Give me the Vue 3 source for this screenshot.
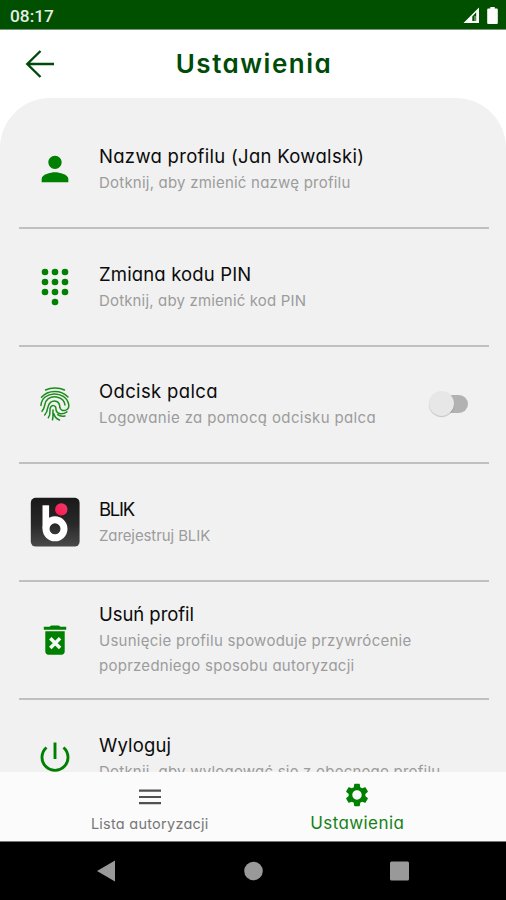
<script setup>
import { ref } from 'vue';

const fingerprintEnabled = ref(false);
const activeTab = ref('settings');

const items = [
  { id: 'profile', title: 'Nazwa profilu (Jan Kowalski)', text: 'Dotknij, aby zmienić nazwę profilu' },
  { id: 'pin', title: 'Zmiana kodu PIN', text: 'Dotknij, aby zmienić kod PIN' },
  { id: 'finger', title: 'Odcisk palca', text: 'Logowanie za pomocą odcisku palca' },
  { id: 'blik', title: 'BLIK', text: 'Zarejestruj BLIK' },
  { id: 'remove', title: 'Usuń profil', text: 'Usunięcie profilu spowoduje przywrócenie poprzedniego sposobu autoryzacji' },
  { id: 'logout', title: 'Wyloguj', text: 'Dotknij, aby wylogować się z obecnego profilu' }
];
</script>

<template>
  <div class="screen">
    <div class="status-bar">
      <span class="clock">08:17</span>
      <div class="status-icons">
        <svg width="17" height="17" viewBox="0 0 17 17">
          <path d="M0.5 16L16 0.5V16z" fill="#fff" />
          <path d="M9.3 14V9.6L13.2 5.2V14z" fill="#005000" />
          <path d="M11 14V9h2.4v5z" fill="#fff" opacity=".35" />
        </svg>
        <svg width="11" height="17" viewBox="0 0 11 17">
          <path d="M3.3 0h4.4v1.6h1.8c.8 0 1.3.5 1.3 1.3v12.8c0 .8-.5 1.3-1.3 1.3h-8C.7 17 .2 16.5.2 15.7V2.9c0-.8.5-1.3 1.3-1.3h1.8z" fill="#fff" />
        </svg>
      </div>
    </div>

    <header class="header">
      <button class="back" aria-label="Wstecz">
        <svg width="29" height="30" viewBox="0 0 29 30">
          <path d="M15.5 2L2.3 15l13.2 13M2.3 15H29" fill="none" stroke="#004b08" stroke-width="2.4" />
        </svg>
      </button>
      <h1>Ustawienia</h1>
    </header>

    <main class="panel">
      <div v-for="item in items" :key="item.id" class="row" :class="item.id">
        <div class="row-icon">
          <svg v-if="item.id === 'profile'" width="40" height="40" viewBox="0 0 24 24" fill="#008000">
            <path d="M12 12c2.21 0 4-1.79 4-4s-1.79-4-4-4-4 1.79-4 4 1.79 4 4 4zm0 2c-2.67 0-8 1.34-8 4v2h16v-2c0-2.66-5.33-4-8-4z" />
          </svg>
          <svg v-else-if="item.id === 'pin'" width="40" height="40" viewBox="0 0 24 24" fill="#008000">
            <circle cx="6" cy="3" r="2" /><circle cx="12" cy="3" r="2" /><circle cx="18" cy="3" r="2" />
            <circle cx="6" cy="9" r="2" /><circle cx="12" cy="9" r="2" /><circle cx="18" cy="9" r="2" />
            <circle cx="6" cy="15" r="2" /><circle cx="12" cy="15" r="2" /><circle cx="18" cy="15" r="2" />
            <circle cx="12" cy="21" r="2" />
          </svg>
          <svg v-else-if="item.id === 'finger'" width="30" height="34" viewBox="0 0 30 34" fill="none" stroke="#1c8c1c" stroke-width="1.5" stroke-linecap="round">
            <path d="M5.5 3C11 .2 19 .2 24.5 3" />
            <path d="M1.5 10.3C8 2.5 21 2.5 28 10" />
            <path d="M1 18.5C1.5 3.5 26 3 28.7 17.5c.9 6.3-7.7 8.5-9 2.7" />
            <path d="M2 24.3C6.5 19.5 3 15.5 8.3 11.7 14 8 24 10 25 18" />
            <path d="M4.7 28C9.5 23 5.8 19 10.5 15.3c4-3 9.4-.8 9.3 5" />
            <path d="M8.3 30.7c3-3.7.9-7 2-10 1.2-3.3 5.7-2.5 5.6.8 0 5.2 6 7 11 3.3" />
            <path d="M12.5 32.7c1-2.6.2-5.7.5-9.7M19.5 33c-3.2-1-5-3.2-5.8-6.5M17.7 27.6c2 1.6 4.5 2 7.3 1.3" />
          </svg>
          <svg v-else-if="item.id === 'blik'" width="50" height="50" viewBox="0 0 50 50">
            <defs>
              <linearGradient id="blikBg" x1="0" y1="0" x2="0" y2="1">
                <stop offset="0" stop-color="#191919" />
                <stop offset=".55" stop-color="#292929" />
                <stop offset="1" stop-color="#4a4a4a" />
              </linearGradient>
              <linearGradient id="blikDot" x1="0" y1="1" x2="1" y2="0">
                <stop offset="0" stop-color="#ff1648" />
                <stop offset="1" stop-color="#ee3a70" />
              </linearGradient>
            </defs>
            <rect x=".8" y=".8" width="48.8" height="48.8" rx="5" fill="url(#blikBg)" />
            <path d="M15.8 8.3V31.5" stroke="#fff" stroke-width="6.6" />
            <circle cx="25" cy="31.8" r="9" fill="none" stroke="#fff" stroke-width="7" />
            <circle cx="31.3" cy="12.4" r="6.2" fill="url(#blikDot)" />
          </svg>
          <svg v-else-if="item.id === 'remove'" width="24" height="30" viewBox="0 0 24 30">
            <path d="M.8 1.8h5.7L8.3.4h7.4l1.8 1.4h5.7v3H.8z" fill="#008000" />
            <path d="M2.3 6.3h19.4v20.2c0 1.8-1.3 3.2-3.1 3.2H5.4c-1.8 0-3.1-1.4-3.1-3.2z" fill="#008000" />
            <path d="M7.3 13.3l9.8 9.8M17.1 13.3l-9.8 9.8" stroke="#f4faf4" stroke-width="3.5" />
          </svg>
          <svg v-else width="32" height="34" viewBox="0 0 32 34" fill="none" stroke="#008000" stroke-width="2.9">
            <path d="M16 1.5V18" />
            <path d="M7.5 6.5a13 13 0 1 0 17 0" />
          </svg>
        </div>
        <div class="row-body">
          <div class="title">{{ item.title }}</div>
          <div class="text">{{ item.text }}</div>
        </div>
        <button
          v-if="item.id === 'finger'"
          class="switch"
          :class="{ on: fingerprintEnabled }"
          aria-label="Odcisk palca"
          @click="fingerprintEnabled = !fingerprintEnabled"
        >
          <span class="thumb"></span>
        </button>
      </div>
    </main>

    <nav class="tabs">
      <button class="tab" :class="{ active: activeTab === 'list' }" @click="activeTab = 'list'">
        <svg width="22" height="26" viewBox="0 0 22 26" stroke="#505050" stroke-width="2.2">
          <path d="M0 6.7h22M0 13h22M0 19.200h22" />
        </svg>
        <span>Lista autoryzacji</span>
      </button>
      <button class="tab" :class="{ active: activeTab === 'settings' }" @click="activeTab = 'settings'">
        <svg width="28" height="28" viewBox="0 0 24 24" fill="#008000">
          <path d="M19.14 12.94c.04-.3.06-.61.06-.94 0-.32-.02-.64-.07-.94l2.03-1.58c.18-.14.23-.41.12-.61l-1.92-3.32c-.12-.22-.37-.29-.59-.22l-2.39.96c-.5-.38-1.03-.7-1.62-.94l-.36-2.54c-.04-.24-.24-.41-.48-.41h-3.84c-.24 0-.43.17-.47.41l-.36 2.54c-.59.24-1.13.57-1.62.94l-2.39-.96c-.22-.08-.47 0-.59.22L2.74 8.87c-.12.21-.08.47.12.61l2.03 1.58c-.05.3-.09.63-.09.94s.02.64.07.94l-2.03 1.58c-.18.14-.23.41-.12.61l1.92 3.32c.12.22.37.29.59.22l2.39-.96c.5.38 1.03.7 1.62.94l.36 2.54c.05.24.24.41.48.41h3.84c.24 0 .44-.17.47-.41l.36-2.54c.59-.24 1.13-.56 1.62-.94l2.39.96c.22.08.47 0 .59-.22l1.92-3.32c.12-.22.07-.47-.12-.61l-2.01-1.58zM12 16c-2.21 0-4-1.79-4-4s1.79-4 4-4 4 1.79 4 4-1.79 4-4 4z" />
        </svg>
        <span>Ustawienia</span>
      </button>
    </nav>

    <div class="system-nav">
      <svg width="22" height="22" viewBox="0 0 22 22"><path d="M2 11L20 .5v21z" fill="#999" /></svg>
      <svg width="22" height="22" viewBox="0 0 22 22"><circle cx="11.5" cy="11" r="9.3" fill="#999" /></svg>
      <svg width="22" height="22" viewBox="0 0 22 22"><rect x="1" y="1.5" width="19" height="19" rx="1.5" fill="#999" /></svg>
    </div>
  </div>
</template>

<style>
body {
  margin: 0;
  background: #fff;
}
</style>

<style scoped>
.screen {
  display: flex;
  flex-direction: column;
  height: 900px;
  overflow: hidden;
  background: #fff;
  font-family: Inter, 'Open Sans', sans-serif;
  font-feature-settings: 'cv11';
}

button {
  padding: 0;
  border: none;
  background: none;
  font: inherit;
  font-feature-settings: inherit;
  cursor: pointer;
}

svg {
  display: block;
  flex: none;
}

.status-bar {
  display: flex;
  align-items: center;
  justify-content: space-between;
  box-sizing: border-box;
  height: 30px;
  flex: none;
  padding: 2px 8px 0 10px;
  background: #005000;
  border-bottom: 1px solid #79957a;
}

.clock {
  color: #e5eee5;
  font-family: Roboto, sans-serif;
  font-size: 17.3px;
  font-weight: 500;
}

.status-icons {
  display: flex;
  gap: 7px;
}

.header {
  display: grid;
  grid-template-columns: 54px 1fr 54px;
  align-items: center;
  height: 68px;
  flex: none;
}

.back {
  justify-self: end;
}

h1 {
  margin: 0;
  padding: 0 0 2px 2px;
  color: #004b08;
  font-size: 26px;
  font-weight: 600;
  text-align: center;
  letter-spacing: 1.5px;
}

.panel {
  flex: 1;
  min-height: 0;
  overflow: hidden;
  box-sizing: border-box;
  padding: 13px 17px 0 19px;
  border-radius: 50px 50px 0 0;
  background: #f1f1f1;
}

.row {
  display: flex;
  align-items: center;
  box-sizing: border-box;
  height: 117.75px;
  border-bottom: 2px solid #c0c0c0;
}

.row-icon {
  display: flex;
  justify-content: center;
  width: 72px;
  flex: none;
}

.row-body {
  flex: 1;
  margin-left: 8px;
}

.title {
  color: #0b0b0b;
  font-size: 18.5px;
  line-height: 27px;
  letter-spacing: 0.15px;
}

.text {
  max-width: 350px;
  color: #9c9c9c;
  font-size: 15px;
  line-height: 25px;
  letter-spacing: 0.22px;
}

.profile .title {
  letter-spacing: 0.3px;
}

.pin .text {
  letter-spacing: 0.16px;
}

.finger .title {
  letter-spacing: 0.35px;
}

.finger .text {
  letter-spacing: 0.36px;
}

.blik .title {
  letter-spacing: -1.3px;
}

.blik .text {
  letter-spacing: -0.1px;
}

.remove .title {
  letter-spacing: -0.05px;
}

.remove .text {
  letter-spacing: 0.26px;
}

.switch {
  position: relative;
  width: 34px;
  height: 18px;
  margin-right: 21px;
  border-radius: 9px;
  background: #b2b2b2;
}

.thumb {
  position: absolute;
  top: -4px;
  left: -5px;
  width: 25px;
  height: 25px;
  border-radius: 50%;
  background: #e7e7e7;
  box-shadow: 0 1px 1px rgba(0, 0, 0, 0.2);
}

.switch.on .thumb {
  left: 14px;
}

.tabs {
  display: grid;
  grid-template-columns: 1fr 1fr;
  height: 69px;
  flex: none;
  padding: 0 45px 0 46px;
  background: #fbfbfb;
}

.tab {
  display: flex;
  flex-direction: column;
  align-items: center;
  padding-top: 12px;
  color: #777;
  font-size: 14.5px;
  line-height: 28px;
  letter-spacing: 0.25px;
}

.tab.active {
  padding-top: 9px;
  color: #158015;
  font-size: 17px;
  letter-spacing: 0.4px;
}

.system-nav {
  display: grid;
  grid-template-columns: repeat(3, 1fr);
  justify-items: center;
  align-items: center;
  height: 58px;
  flex: none;
  padding: 0 33px;
  background: #000;
  border-top: 1px solid #777;
}
</style>
